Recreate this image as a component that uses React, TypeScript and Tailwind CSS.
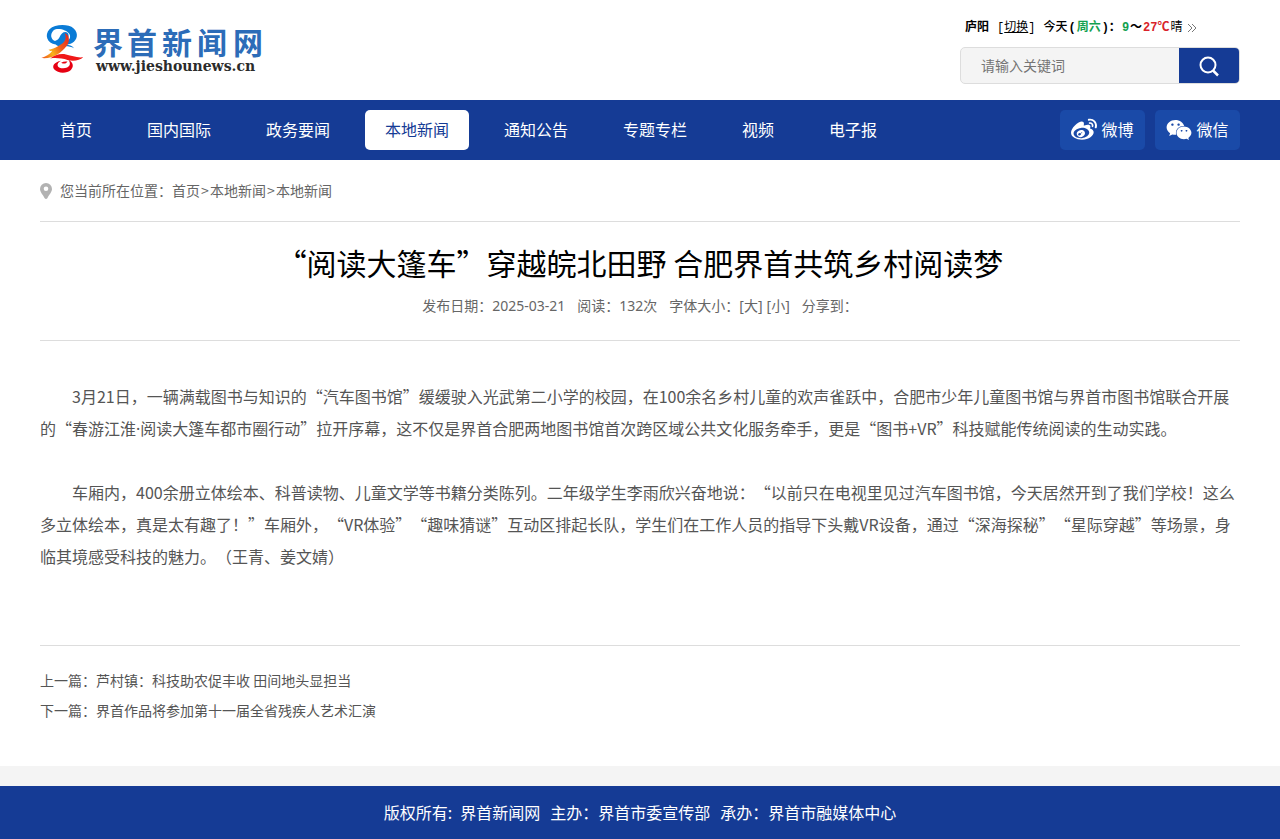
import { useState } from 'react';
import { FaWeixin, FaWeibo } from 'react-icons/fa';

const navItems = ['首页', '国内国际', '政务要闻', '本地新闻', '通知公告', '专题专栏', '视频', '电子报'];

const socials = [
  { label: '微博', Icon: FaWeibo },
  { label: '微信', Icon: FaWeixin },
];

const siblings = [
  { label: '上一篇：', title: '芦村镇：科技助农促丰收 田间地头显担当' },
  { label: '下一篇：', title: '界首作品将参加第十一届全省残疾人艺术汇演' },
];

function Logo() {
  return (
    <svg width="230" height="60" viewBox="0 0 230 60" role="img" aria-label="界首新闻网">
      <defs>
        <linearGradient id="swoosh" gradientUnits="userSpaceOnUse" x1="98" y1="40" x2="14" y2="95">
          <stop offset="0" stopColor="#e8281c" />
          <stop offset="0.35" stopColor="#ee5a1c" />
          <stop offset="0.65" stopColor="#f9b21a" />
          <stop offset="1" stopColor="#ee4a1c" />
        </linearGradient>
      </defs>
      <g transform="translate(-4 0.500) scale(0.375 0.395)">
        {/* blue head loop */}
        <path
          transform="translate(-16 0) scale(1.040 1)"
          fillRule="evenodd"
          d="M66 61C44 57 36 37 50 22 64 9 98 8 112 20c13 11 10 29-4 37-5 3-12 4-16 4 8 1 16 3 21 9-12-6-26-5-38-3-3-2-6-3-9-6zM60 25c-9 9-7 22 4 27 6-2 10-5 12-10 3-8 8-13 15-13 7 1 10 8 7 15-1 4-2 6-4 8 8-3 11-11 7-18-7-11-31-17-41-9z"
          fill="#0a7bd6"
        />
        <path
          transform="translate(2 0) scale(0.870 1)"
          d="M86 32c14 4 17 19 6 32C75 83 48 98 14 95c14-4 25-9 33-18-5 0-8-1-11-3 10-1 20-4 29-9 10-4 19-8 22-16 2-6 2-11-1-17z"
          fill="url(#swoosh)"
        />
        {/* red arm and hook */}
        <path d="M38 96c12-9 27-13 42-10 17 3 28 9 46 7-9 7-24 11-42 7-14-4-30-6-46-4z" fill="#f01818" />
        <path
          transform="translate(-7 0)"
          d="M74 102c-18 3-26 14-18 22 9 10 33 11 44 1 9-8 6-20-6-25 5 8 5 15-4 19-9 4-23 2-25-4-2-5 2-10 9-13z"
          fill="#e60012"
        />
        <path d="M67 107c5-3 11-4 17-3-3 5-9 7-17 3z" fill="#e60012" />
      </g>
      <text
        x="53 87 122 157 193"
        y="34"
        fontSize="30"
        fontWeight="700"
        fill="#2c6cb8"
        fontFamily="'Noto Sans CJK SC', sans-serif"
      >
        界首新闻网
      </text>
      <text x="56" y="51" fontSize="14" fontWeight="700" fill="#2b2b2b" fontFamily="'DejaVu Serif', serif">
        www.jieshounews.cn
      </text>
    </svg>
  );
}

function Weather() {
  return (
    <div className="flex items-center px-[5px] text-xs leading-4 text-black font-['Liberation_Mono','Noto_Sans_CJK_SC',monospace]">
      <strong>庐阳</strong>
      <span className="ml-2">
        [
        <a href="#city" className="underline">切换</a>
        ]
      </span>
      <span className="ml-2 flex items-center gap-px font-bold">
        <span className="font-medium">今天</span>
        <span>(</span>
        <span className="text-[#12a150]">周六</span>
        <span>)：</span>
        <span className="text-[#12a150]">9</span>
        <span>～</span>
        <span className="text-[#d9232a]">27℃</span>
        <span className="font-normal">晴</span>
      </span>
      <svg className="ml-1" width="10" height="10" viewBox="0 0 10 10" fill="none" stroke="#777">
        <path d="M1 1l4 4-4 4M5 1l4 4-4 4" />
      </svg>
    </div>
  );
}

function Search() {
  return (
    <form
      className="flex h-[37px] w-[280px] overflow-hidden rounded-[5px] border border-[#ddd] bg-[#f4f4f4]"
      onSubmit={(e) => e.preventDefault()}
    >
      <input
        type="text"
        aria-label="搜索"
        placeholder="请输入关键词"
        className="min-w-0 flex-1 bg-transparent px-5 pb-0.5 text-sm outline-none placeholder:text-[#757575]"
      />
      <button type="submit" aria-label="搜索" className="flex w-[60px] items-center justify-center bg-[#153b95]">
        <svg width="22" height="22" viewBox="0 0 22 22" fill="none" stroke="#fff" strokeWidth="2">
          <circle cx="10" cy="10" r="7.5" />
          <path d="M15 15.5l5 5" strokeWidth="2.5" />
        </svg>
      </button>
    </form>
  );
}

export default function App() {
  const [large, setLarge] = useState(false);

  return (
    <div
      lang="zh-CN"
      className="bg-white text-sm text-[#666] font-['Noto_Sans_CJK_SC',sans-serif] [text-spacing-trim:space-all]"
    >
      <header className="mx-auto flex h-[100px] max-w-[1200px] items-start justify-between">
        <a href="#home" className="mt-5">
          <Logo />
        </a>
        <div className="mt-5 flex flex-col gap-[11px]">
          <Weather />
          <Search />
        </div>
      </header>

      <nav className="bg-[#153b95] text-base text-white">
        <div className="mx-auto flex h-[60px] max-w-[1200px] items-center justify-between">
          <ul className="flex gap-[15px]">
            {navItems.map((item) => (
              <li key={item}>
                <a
                  href="#nav"
                  className={`block rounded-[5px] px-5 pb-0.5 leading-[38px] ${item === '本地新闻' ? 'bg-white text-[#153b95]' : ''}`}
                >
                  {item}
                </a>
              </li>
            ))}
          </ul>
          <div className="flex gap-2.5">
            {socials.map(({ label, Icon }) => (
              <a
                key={label}
                href="#social"
                className="flex h-10 w-[85px] items-center justify-center gap-1 rounded-[5px] bg-[#1a4aa8]"
              >
                <Icon size={26} />
                <span className="pb-0.5">{label}</span>
              </a>
            ))}
          </div>
        </div>
      </nav>

      <main className="mx-auto max-w-[1200px]">
        <div className="flex h-[62px] items-center border-b border-[#ddd]">
          <svg className="mr-2" width="12" height="16" viewBox="0 0 12 16" fill="#b2b2b2">
            <path
              fillRule="evenodd"
              d="M6 0a6 6 0 0 1 6 6c0 3-2.500 5-4.500 9q-1.500 2-3 0C2.500 11 0 9 0 6a6 6 0 0 1 6-6zm0 3.500a2.300 2.300 0 1 0 0 4.600 2.300 2.300 0 0 0 0-4.600z"
            />
          </svg>
          <div className="flex pb-0.5">
            <span>您当前所在位置：</span>
            <a href="#home">首页</a>
            <span className="w-2.5 text-center">&gt;</span>
            <a href="#local">本地新闻</a>
            <span className="w-2.5 text-center">&gt;</span>
            <a href="#local">本地新闻</a>
          </div>
        </div>

        <article>
          <div className="border-b border-[#ddd] pt-[18px] pb-[23px]">
            <h1 className="text-center text-[30px] leading-11 text-black">
              “阅读大篷车”穿越皖北田野 合肥界首共筑乡村阅读梦
            </h1>
            <div className="mt-[11px] flex justify-center gap-3 leading-[22px] font-['Noto_Sans','Noto_Sans_CJK_SC',sans-serif]">
              <span>发布日期：2025-03-21</span>
              <span>阅读：132次</span>
              <span className="flex gap-1">
                <span>
                  字体大小：
                  <button type="button" onClick={() => setLarge(true)}>[大]</button>
                </span>
                <button type="button" onClick={() => setLarge(false)}>[小]</button>
              </span>
              <span>分享到：</span>
            </div>
          </div>

          <div
            className={`flex flex-col gap-8 border-b border-[#ddd] pt-[39px] pb-[73px] leading-8 text-[#555] ${large ? 'text-lg' : 'text-base'}`}
          >
            <p className="indent-8">
              3月21日，一辆满载图书与知识的“汽车图书馆”缓缓驶入光武第二小学的校园，在100余名乡村儿童的欢声雀跃中，合肥市少年儿童图书馆与界首市图书馆联合开展的“春游江淮<span className="leading-none font-['Noto_Sans']">·</span>阅读大篷车都市圈行动”拉开序幕，这不仅是界首合肥两地图书馆首次跨区域公共文化服务牵手，更是“图书+VR”科技赋能传统阅读的生动实践。
            </p>
            <p className="indent-8">
              车厢内，400余册立体绘本、科普读物、儿童文学等书籍分类陈列。二年级学生李雨欣兴奋地说：“以前只在电视里见过汽车图书馆，今天居然开到了我们学校！这么多立体绘本，真是太有趣了！”车厢外，“VR体验”“趣味猜谜”互动区排起长队，学生们在工作人员的指导下头戴VR设备，通过“深海探秘”“星际穿越”等场景，身临其境感受科技的魅力。（王青、姜文婧）
            </p>
          </div>
        </article>

        <ul className="pt-[19px] pb-[41px] leading-[30px] text-[#555]">
          {siblings.map((s) => (
            <li key={s.label}>
              {s.label}
              <a href="#article">{s.title}</a>
            </li>
          ))}
        </ul>
      </main>

      <footer className="border-t-[20px] border-[#f4f4f4] bg-[#153b95] text-base text-white">
        <div className="flex h-[53px] items-center justify-center gap-2.5 pb-0.5">
          <span className="flex gap-2">
            <span>版权所有:</span>
            <span>界首新闻网</span>
          </span>
          <span>主办：界首市委宣传部</span>
          <span>承办：界首市融媒体中心</span>
        </div>
      </footer>
    </div>
  );
}
